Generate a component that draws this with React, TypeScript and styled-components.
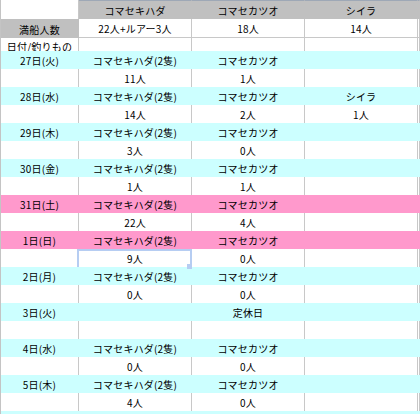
import styled, { createGlobalStyle, css } from "styled-components";

type Tone = "white" | "cyan" | "pink" | "grey";

const fills: Record<Tone, string> = {
  white: "#ffffff",
  cyan: "#ccffff",
  pink: "#ff99cc",
  grey: "#c0c0c0",
};

const GlobalStyle = createGlobalStyle`
  html, body {
    margin: 0;
    padding: 0;
    background: #ffffff;
    overflow: hidden;
  }
  body {
    font-family: "Noto Sans CJK JP", "Noto Sans", sans-serif;
  }
`;

const Sheet = styled.div`
  width: 420px;
  height: 414px;
  overflow: hidden;
  box-sizing: border-box;
  border-left: 1px solid #c4c4c4;
`;

const Row = styled.div<{ $height?: number }>`
  display: grid;
  grid-template-columns: 78px 113px 113px 113px 1fr;
  height: ${(p) => p.$height ?? 18}px;
`;

const Cell = styled.div<{ $tone: Tone; $top?: boolean; $bottom?: boolean; $selected?: boolean }>`
  position: relative;
  box-sizing: border-box;
  background: ${(p) => fills[p.$tone]};
  border-right: 1px solid ${(p) => (p.$tone === "white" ? "#c8c8c8" : fills[p.$tone])};
  ${(p) => p.$top && css`border-top: 1px solid #9ea8b6;`}
  ${(p) => p.$bottom && css`border-bottom: 1px solid #c8c8c8;`}
  display: flex;
  align-items: center;
  justify-content: center;
  padding-top: 1px;
  font-size: 10px;
  letter-spacing: 0.2px;
  color: #000000;
  white-space: nowrap;
  ${(p) =>
    p.$selected &&
    css`
      &::after {
        content: "";
        position: absolute;
        left: -2px;
        right: -1px;
        top: 0;
        bottom: -2px;
        border: 2px solid #b6cdf2;
        pointer-events: none;
      }
      &::before {
        content: "";
        position: absolute;
        right: -1px;
        bottom: -2px;
        width: 5px;
        height: 5px;
        background: #b6cdf2;
        z-index: 1;
      }
    `}
`;

type DayRow = {
  tone: Tone;
  cells: [string, string, string, string];
  selected?: number;
};

const days: DayRow[] = [
  { tone: "cyan", cells: ["27日(火)", "コマセキハダ(2隻)", "コマセカツオ", ""] },
  { tone: "white", cells: ["", "11人", "1人", ""] },
  { tone: "cyan", cells: ["28日(水)", "コマセキハダ(2隻)", "コマセカツオ", "シイラ"] },
  { tone: "white", cells: ["", "14人", "2人", "1人"] },
  { tone: "cyan", cells: ["29日(木)", "コマセキハダ(2隻)", "コマセカツオ", ""] },
  { tone: "white", cells: ["", "3人", "0人", ""] },
  { tone: "cyan", cells: ["30日(金)", "コマセキハダ(2隻)", "コマセカツオ", ""] },
  { tone: "white", cells: ["", "1人", "1人", ""] },
  { tone: "pink", cells: ["31日(土)", "コマセキハダ(2隻)", "コマセカツオ", ""] },
  { tone: "white", cells: ["", "22人", "4人", ""] },
  { tone: "pink", cells: ["1日(日)", "コマセキハダ(2隻)", "コマセカツオ", ""] },
  { tone: "white", cells: ["", "9人", "0人", ""], selected: 1 },
  { tone: "cyan", cells: ["2日(月)", "コマセキハダ(2隻)", "コマセカツオ", ""] },
  { tone: "white", cells: ["", "0人", "0人", ""] },
  { tone: "cyan", cells: ["3日(火)", "", "定休日", ""] },
  { tone: "white", cells: ["", "", "", ""] },
  { tone: "cyan", cells: ["4日(水)", "コマセキハダ(2隻)", "コマセカツオ", ""] },
  { tone: "white", cells: ["", "0人", "0人", ""] },
  { tone: "cyan", cells: ["5日(木)", "コマセキハダ(2隻)", "コマセカツオ", ""] },
  { tone: "white", cells: ["", "4人", "0人", ""] },
  { tone: "cyan", cells: ["", "", "", ""] },
];

export default function App() {
  return (
    <>
      <GlobalStyle />
      <Sheet>
        <Row $height={19}>
          <Cell $tone="white" />
          <Cell $tone="grey" $top>コマセキハダ</Cell>
          <Cell $tone="grey" $top>コマセカツオ</Cell>
          <Cell $tone="grey" $top>シイラ</Cell>
          <Cell $tone="grey" $top />
        </Row>
        <Row $height={19}>
          <Cell $tone="grey">満船人数</Cell>
          <Cell $tone="white" $bottom>22人+ルアー3人</Cell>
          <Cell $tone="white" $bottom>18人</Cell>
          <Cell $tone="white" $bottom>14人</Cell>
          <Cell $tone="white" $bottom />
        </Row>
        <Row $height={13}>
          <Cell $tone="white">日付/釣りもの</Cell>
          <Cell $tone="white" />
          <Cell $tone="white" />
          <Cell $tone="white" />
          <Cell $tone="white" />
        </Row>
        {days.map((day, i) => (
          <Row key={i}>
            {day.cells.map((text, j) => (
              <Cell key={j} $tone={day.tone} $selected={day.selected === j}>
                {text}
              </Cell>
            ))}
            <Cell $tone={day.tone} />
          </Row>
        ))}
      </Sheet>
    </>
  );
}
